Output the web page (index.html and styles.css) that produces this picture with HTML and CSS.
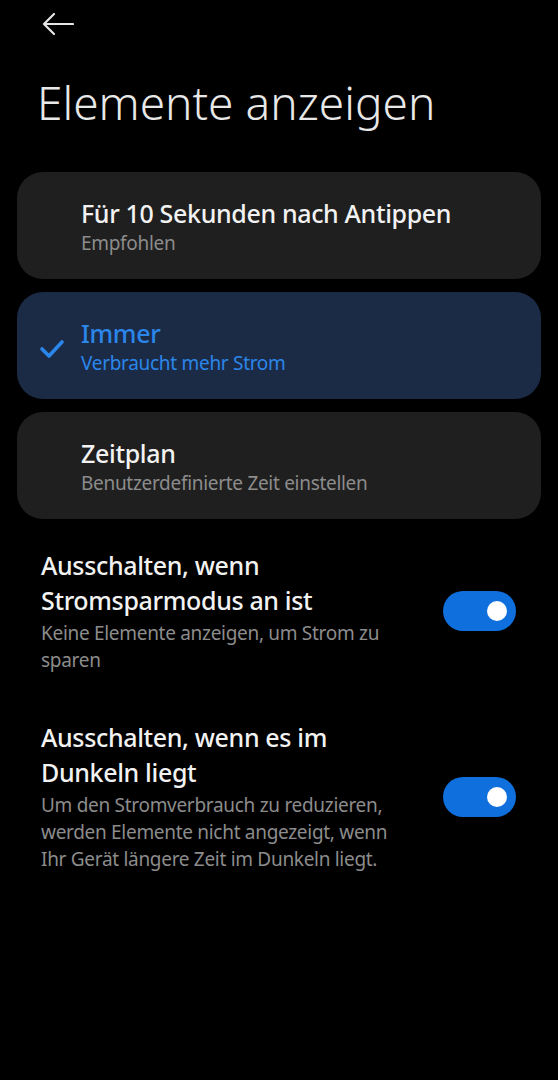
FILE: index.html
```html
<!DOCTYPE html>
<html lang="de">
<head>
    <meta charset="UTF-8">
    <meta name="viewport" content="width=device-width, initial-scale=1.0">
    <title>Elemente anzeigen</title>
    <link rel="stylesheet" href="styles.css">
</head>
<body>

    <div class="topbar">
        <svg class="back" width="32" height="24" viewBox="0 0 32 24">
            <path d="M31 12 H2 M12 2 L2 12 L12 22" fill="none" stroke="#e6e6e6" stroke-width="2.2" stroke-linecap="round" stroke-linejoin="round"/>
        </svg>
    </div>

    <h1 class="title">Elemente anzeigen</h1>

    <div class="options">
        <div class="option">
            <div class="check"></div>
            <div class="option-text">
                <div class="option-title">Für 10 Sekunden nach Antippen</div>
                <div class="option-sub">Empfohlen</div>
            </div>
        </div>
        <div class="option selected">
            <div class="check">
                <svg width="26" height="22" viewBox="0 0 26 22">
                    <path d="M3 11 L10 18 L23 4" fill="none" stroke="#2b86ea" stroke-width="3.6" stroke-linecap="round" stroke-linejoin="round"/>
                </svg>
            </div>
            <div class="option-text">
                <div class="option-title">Immer</div>
                <div class="option-sub">Verbraucht mehr Strom</div>
            </div>
        </div>
        <div class="option">
            <div class="check"></div>
            <div class="option-text">
                <div class="option-title">Zeitplan</div>
                <div class="option-sub">Benutzerdefinierte Zeit einstellen</div>
            </div>
        </div>
    </div>

    <div class="setting first">
        <div class="setting-text">
            <div class="setting-title">Ausschalten, wenn Stromsparmodus an ist</div>
            <div class="setting-sub">Keine Elemente anzeigen, um Strom zu sparen</div>
        </div>
        <div class="switch on"><span class="knob"></span></div>
    </div>

    <div class="setting">
        <div class="setting-text">
            <div class="setting-title">Ausschalten, wenn es im Dunkeln liegt</div>
            <div class="setting-sub">Um den Stromverbrauch zu reduzieren, werden Elemente nicht angezeigt, wenn Ihr Gerät längere Zeit im Dunkeln liegt.</div>
        </div>
        <div class="switch on"><span class="knob"></span></div>
    </div>

</body>
</html>
```

FILE: styles.css
```css
body {
    margin: 0;
    background-color: #000;
    color: #f2f2f2;
    font-family: "Noto Sans", Roboto, sans-serif;
}
.topbar {
    height: 48px;
    padding-left: 42px;
    display: flex;
    align-items: center;
}
.back {
    display: block;
}
.title {
    margin: 24px 0 0 37px;
    font-size: 46px;
    font-weight: 300;
    line-height: 60px;
    color: #e8e8e8;
}
.options {
    margin: 40px 17px 0 17px;
    display: flex;
    flex-direction: column;
    gap: 13px;
}
.option {
    background-color: #1f1f1f;
    border-radius: 26px;
    display: flex;
    align-items: center;
    padding: 26px 20px 23px 22px;
}
.option.selected {
    background-color: #1b2b46;
}
.check {
    width: 42px;
    display: flex;
    align-items: center;
    padding-top: 4px;
}
.option-title {
    font-size: 25px;
    font-weight: 500;
    line-height: 30px;
    letter-spacing: -0.35px;
    color: #f2f2f2;
}
.option-sub {
    margin-top: 2px;
    font-size: 19px;
    line-height: 26px;
    letter-spacing: -0.3px;
    color: #8c8c8c;
}
.selected .option-title,
.selected .option-sub {
    color: #2b86ea;
}
.setting {
    display: flex;
    align-items: center;
    padding: 0 42px 0 41px;
    margin-top: 46px;
}
.setting.first {
    margin-top: 29px;
}
.setting-text {
    flex: 1;
    margin-right: 40px;
}
.setting-title {
    font-size: 25px;
    font-weight: 500;
    line-height: 35px;
    letter-spacing: -0.35px;
    color: #f2f2f2;
}
.setting-sub {
    margin-top: 2px;
    font-size: 19px;
    line-height: 27px;
    letter-spacing: -0.3px;
    color: #8c8c8c;
}
.switch {
    width: 73px;
    height: 40px;
    border-radius: 20px;
    background-color: #333;
    position: relative;
    flex-shrink: 0;
}
.switch.on {
    background-color: #0f6fdc;
}
.knob {
    position: absolute;
    top: 10px;
    right: 9px;
    width: 20px;
    height: 20px;
    border-radius: 50%;
    background-color: #fff;
}
```
